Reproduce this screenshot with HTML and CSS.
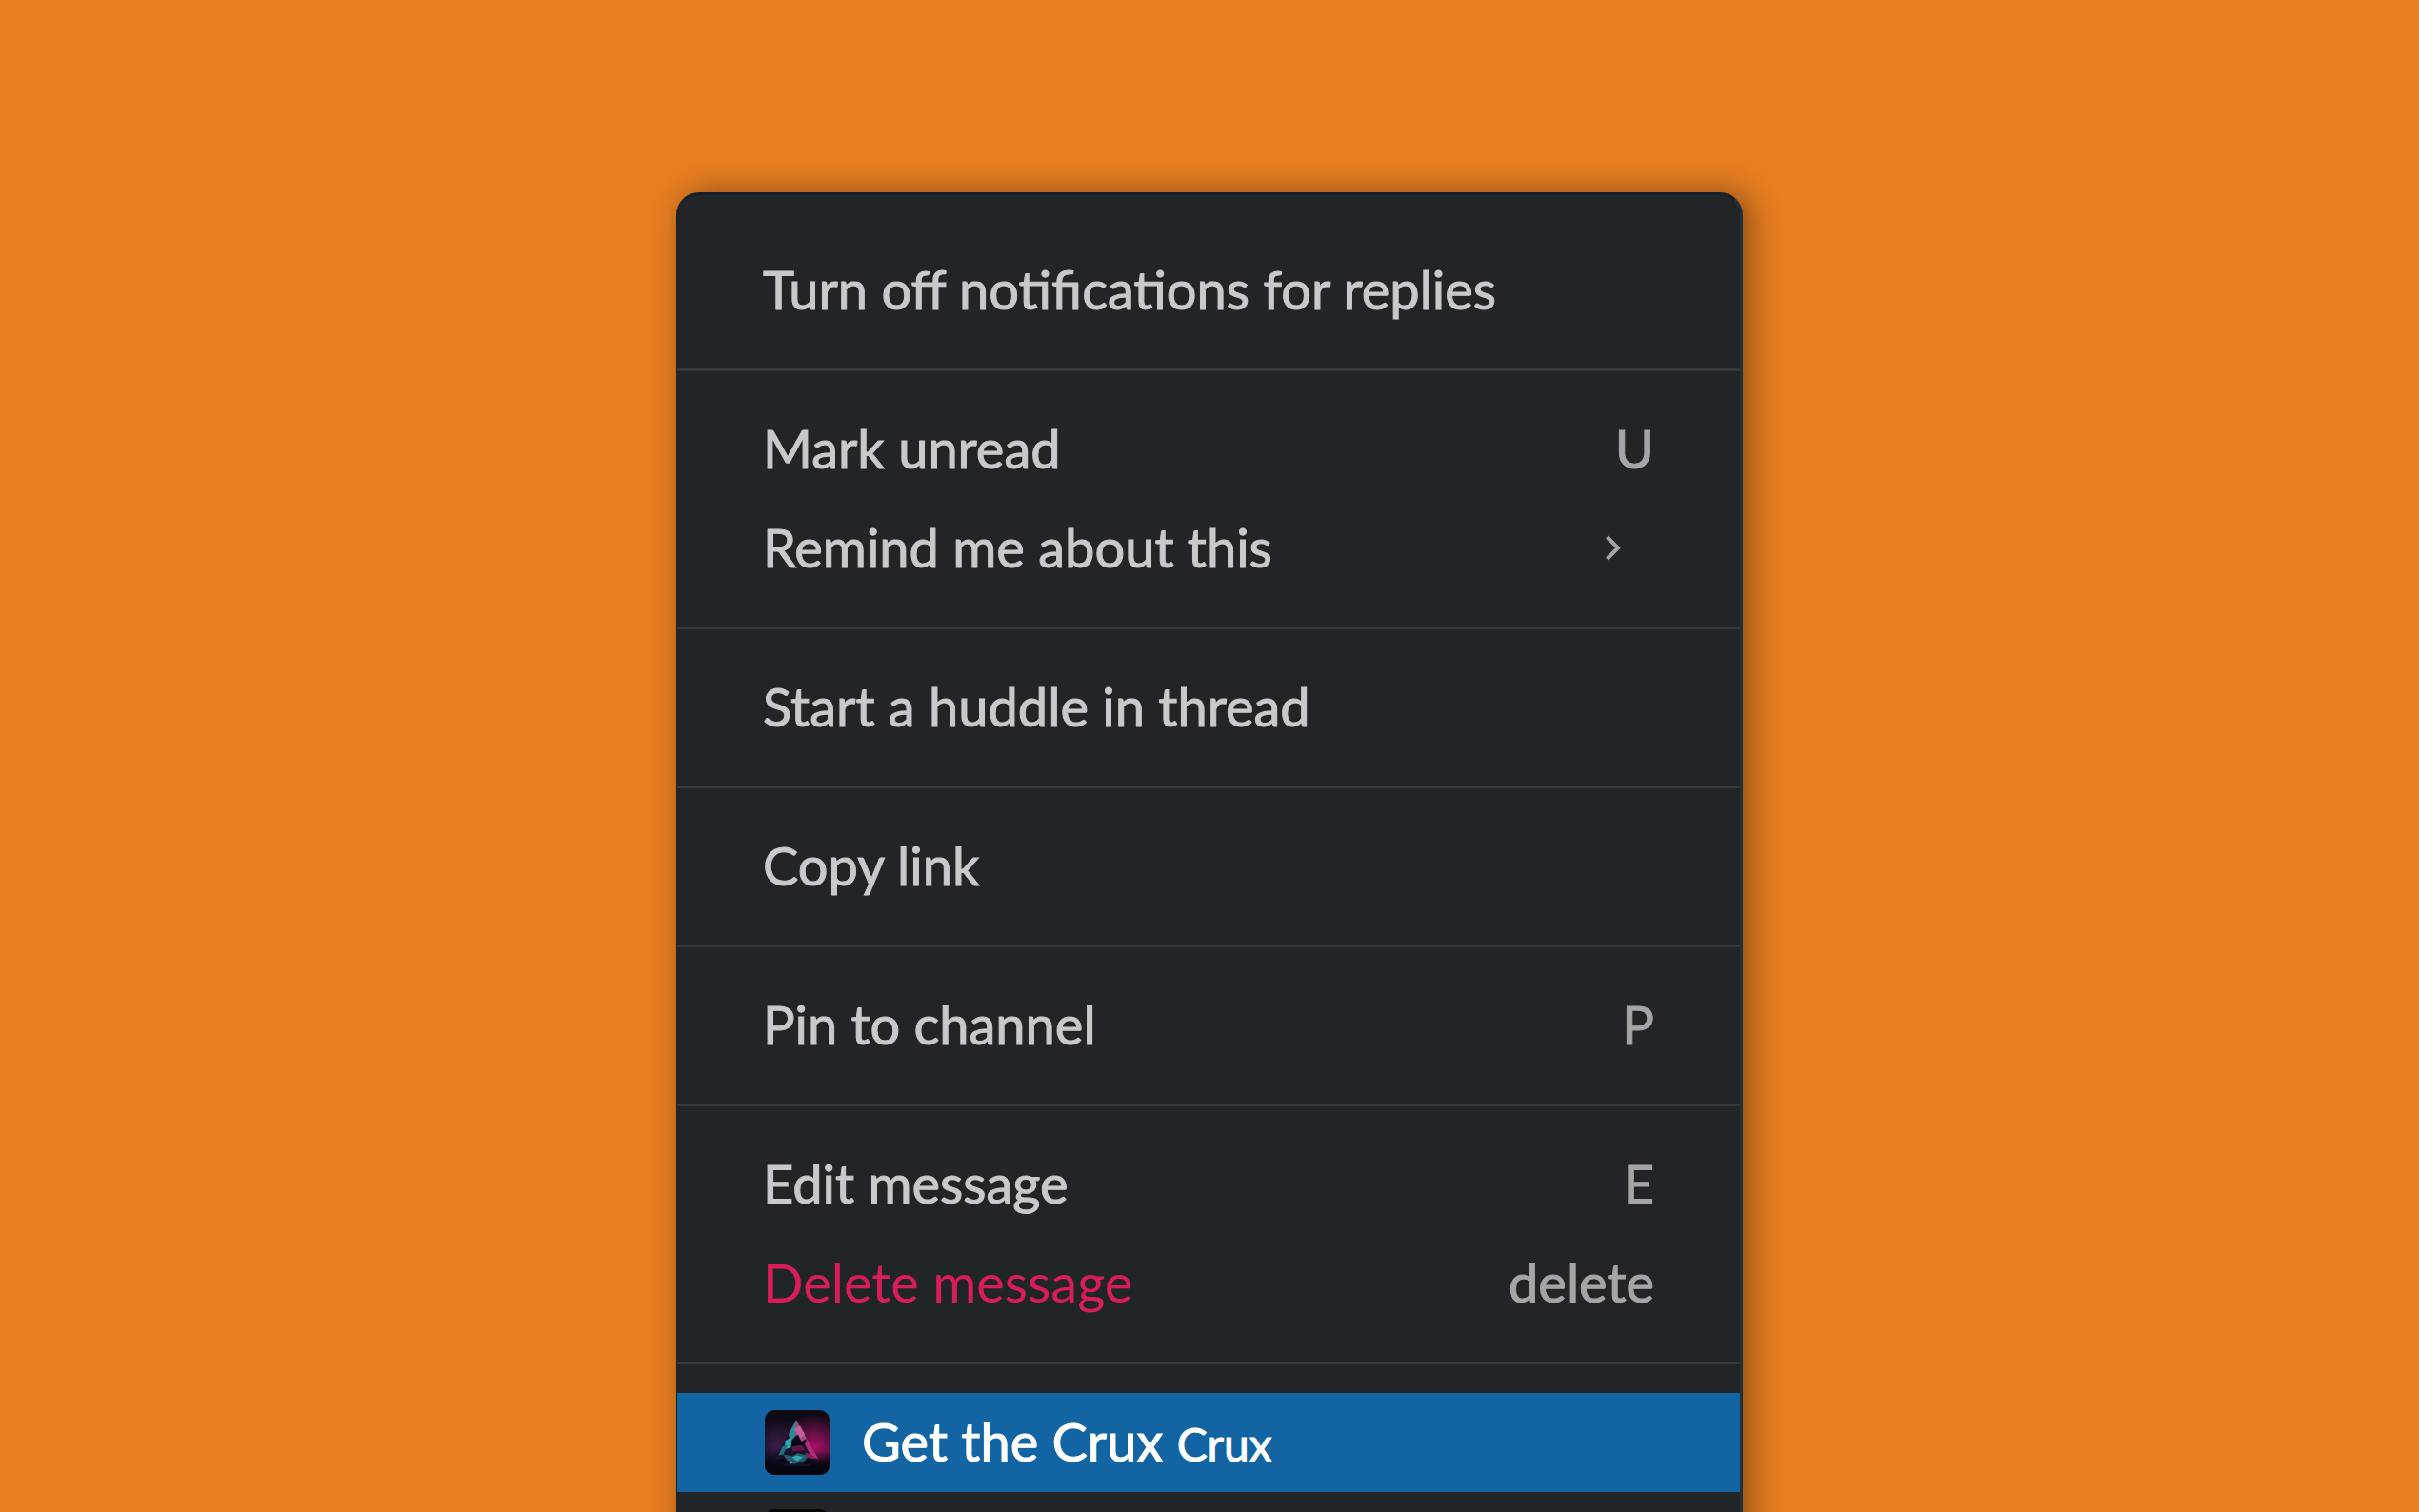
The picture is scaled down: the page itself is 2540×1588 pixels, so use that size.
FILE: index.html
```html
<!doctype html>
<html lang="en">

<head>
  <meta charset="utf-8">
  <meta name="viewport" content="width=device-width, initial-scale=1.0">
  <title>Message actions</title>
  <link rel="stylesheet" href="styles.css">
</head>

<body>

  <div class="menu" role="menu">
    <div class="menu-group" role="group">
      <button class="menu-item" role="menuitem">Turn off notifications for replies</button>
    </div>

    <div class="menu-group" role="group">
      <button class="menu-item" role="menuitem">Mark unread <span class="shortcut">U</span></button>
      <button class="menu-item" role="menuitem" aria-haspopup="true">
        Remind me about this
        <svg class="chevron" viewBox="0 0 18 28" aria-hidden="true">
          <path d="M2.5 3 14 14.500 2.500 26"/>
        </svg>
      </button>
    </div>

    <div class="menu-group" role="group">
      <button class="menu-item" role="menuitem">Start a huddle in thread</button>
    </div>

    <div class="menu-group" role="group">
      <button class="menu-item" role="menuitem">Copy link</button>
    </div>

    <div class="menu-group" role="group">
      <button class="menu-item" role="menuitem">Pin to channel <span class="shortcut">P</span></button>
    </div>

    <div class="menu-group" role="group">
      <button class="menu-item" role="menuitem">Edit message <span class="shortcut">E</span></button>
      <button class="menu-item danger" role="menuitem">Delete message <span class="shortcut">delete</span></button>
    </div>

    <!-- app shortcuts -->
    <div class="menu-group" role="group">
      <button class="menu-item app active" role="menuitem">
        <svg class="app-icon" viewBox="0 0 66 66" aria-hidden="true">
          <defs>
            <radialGradient id="pink" cx="0.76" cy="0.58" r="0.52">
              <stop offset="0" stop-color="#a80f68"/>
              <stop offset="0.4" stop-color="#6d0f4a"/>
              <stop offset="1" stop-color="#6d0f4a" stop-opacity="0"/>
            </radialGradient>
            <radialGradient id="violet" cx="0.2" cy="0.55" r="0.42">
              <stop offset="0" stop-color="#3a1c48"/>
              <stop offset="1" stop-color="#3a1c48" stop-opacity="0"/>
            </radialGradient>
            <linearGradient id="shade" x1="0" y1="0" x2="0" y2="1">
              <stop offset="0.62" stop-color="#07060f" stop-opacity="0"/>
              <stop offset="0.86" stop-color="#07060f"/>
            </linearGradient>
          </defs>
          <rect width="66" height="66" fill="#0d0b14"/>
          <rect width="66" height="66" fill="url(#violet)"/>
          <rect width="66" height="66" fill="url(#pink)"/>
          <rect width="66" height="66" fill="url(#shade)"/>
          <path d="M32 9 55 50 45 57H20L11 49z" fill="#17142a"/>
          <path d="M32 10 24 25l3 7 6-8z" fill="#2b8794"/>
          <path d="M32 10 43 29l-6 3-6-8z" fill="#a04a80"/>
          <path d="M30 19l6-3 5 9-5 4z" fill="#c65d9b"/>
          <path d="M43 29 55 50l-8-3-6-12z" fill="#b52c78"/>
          <path d="M21 31l6-3v10l-7 2z" fill="#2ba9b5"/>
          <path d="M18 37l5-1-4 9-5 1z" fill="#246f80"/>
          <path d="M28 30l6-5 5 11-12 2z" fill="#090713"/>
          <path d="M28 37l10-1 3 5-13 1z" fill="#641345"/>
          <path d="M18 45l10 2 5-3 12 2-5 6-10 3-7-4z" fill="#22606f"/>
          <path d="M28 48l5-2 6 2-6 4zM24 52l5 1-2 2z" fill="#36a9b5"/>
          <path d="M41 43l8 3 3 4-9-2z" fill="#842158"/>
          <path d="M12 50l8-1 7 7-8-1zM52 51l-8-1-6 6 8-1z" fill="#0a0817"/>
        </svg>
        <span>Get the Crux <small class="app-name">Crux</small></span>
      </button>
      <button class="menu-item app" role="menuitem">
        <svg class="app-icon" viewBox="0 0 66 66" aria-hidden="true">
          <rect width="66" height="66" fill="#050507"/>
        </svg>
      </button>
    </div>
  </div>

</body>

</html>
```

FILE: styles.css
```css
* {
  box-sizing: border-box;
}

body {
  margin: 0;
  height: 100vh;
  overflow: hidden;
  padding: 202px 20px 0;
  background-color: #e67e22;
  font-family: Lato, 'Noto Sans', sans-serif;
}

.menu {
  max-width: 1120px;
  margin: 0 auto;
  padding-top: 18px;
  border: 1px solid #0b2530;
  border-top: 3px solid #15202a;
  border-right: 3px solid #22303a;
  border-radius: 24px;
  background-color: #212528;
  box-shadow: 8px 0 32px rgba(0, 0, 0, 0.4);
}

.menu-group {
  padding: 30px 0;
}

.menu-group + .menu-group {
  border-top: 3px solid #35383c;
}

.menu-item {
  display: flex;
  align-items: center;
  justify-content: space-between;
  width: 100%;
  height: 104px;
  padding: 0 90px 2px;
  border: 0;
  background: none;
  color: #c8c9cb;
  font: inherit;
  font-size: 56px;
  line-height: 72px;
  text-align: left;
  white-space: nowrap;
  cursor: pointer;
  -webkit-text-stroke: 1px;
}

.menu-item.danger {
  color: #d81d58;
  -webkit-text-stroke: 0;
}

.menu-item .shortcut {
  color: #a4a5a7;
  -webkit-text-stroke: 1px;
}

.chevron {
  width: 18px;
  height: 28px;
  margin-right: 34px;
  fill: none;
  stroke: #a4a5a7;
  stroke-width: 4;
}

.menu-item.app {
  justify-content: flex-start;
  gap: 34px;
  padding: 0 92px;
}

.menu-item.active {
  background-color: #1264a3;
  color: #fff;
}

.app-icon {
  width: 68px;
  height: 68px;
  border-radius: 10px;
}

.app-name {
  font-size: 48px;
}
```
